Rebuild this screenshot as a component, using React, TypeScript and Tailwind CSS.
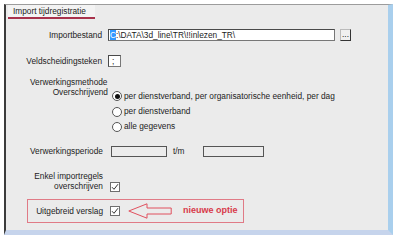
import React from "react";

const font = { fontFamily: '"Liberation Sans", Arial, sans-serif' };

function Checkbox() {
  return (
    <div className="w-[10px] h-[10px] bg-white border border-[#6f6f6f] flex items-center justify-center shrink-0">
      <svg width="8" height="8" viewBox="0 0 8 8">
        <path d="M1 4.2 L3 6.3 L7 1.2" fill="none" stroke="#333" strokeWidth="1" />
      </svg>
    </div>
  );
}

function Radio({ checked }: { checked?: boolean }) {
  return (
    <div className="w-[10px] h-[10px] rounded-full bg-white border border-[#555] flex items-center justify-center shrink-0">
      {checked && <div className="w-[5px] h-[5px] rounded-full bg-[#111]" />}
    </div>
  );
}

export default function App() {
  return (
    <div className="w-[400px] h-[241px] bg-white text-[8.3px] text-[#1c1c1c]" style={font}>
      <div className="pt-[4px] pl-[4px] w-[393px]">
        <div className="h-[231px] bg-[#ebebeb] border-t border-t-[#9c9c9c] border-l-2 border-l-[#3c3c3c] border-r-[5px] border-r-[#a9cfed] border-b-[5px] border-b-[#c6d4ec] flex flex-col">
          {/* tab header */}
          <div className="ml-[2px] w-[87px] h-[14px] pl-[5px] bg-[#f3f3f3] border-b-2 border-b-[#a8324c] leading-[12px]">
            Import tijdregistratie
          </div>

          {/* Importbestand */}
          <div className="mt-[10px] flex items-center h-[12px]">
            <div className="w-[96px] text-right">Importbestand</div>
            <div className="ml-[6px] w-[227px] h-[12px] bg-white border border-[#777] border-t-[#4a4a4a] border-l-[#4a4a4a] leading-[10px] pl-[1px]">
              <span className="bg-[#3399ff] text-white">C</span>:\DATA\3d_line\TR\!!inlezen_TR\
            </div>
            <div className="ml-[5px] w-[11px] h-[12px] bg-[#f0f0f0] border border-[#bbb] border-b-[#333] border-r-[#333] leading-[8px] text-center">
              ...
            </div>
          </div>

          {/* Veldscheidingsteken */}
          <div className="mt-[14px] flex items-center h-[12px]">
            <div className="w-[96px] text-right">Veldscheidingsteken</div>
            <div className="ml-[6px] w-[13px] h-[12px] bg-white border border-[#777] border-t-[#4a4a4a] border-l-[#4a4a4a] leading-[10px] pl-[3px]">
              ;
            </div>
          </div>

          {/* Verwerkingsmethode */}
          <div className="mt-[11px] ml-[24px] leading-[9px] h-[9px]">Verwerkingsmethode</div>
          <div className="mt-[1px] flex">
            <div className="w-[102px] text-right leading-[8px]">Overschrijvend</div>
            <div className="ml-[4px] flex flex-col">
              <div className="h-[16px] flex items-center gap-[2px]">
                <Radio checked />
                <span>per dienstverband, per organisatorische eenheid, per dag</span>
              </div>
              <div className="h-[15px] flex items-center gap-[2px]">
                <Radio />
                <span>per dienstverband</span>
              </div>
              <div className="h-[15px] flex items-center gap-[2px]">
                <Radio />
                <span>alle gegevens</span>
              </div>
            </div>
          </div>

          {/* Verwerkingsperiode */}
          <div className="mt-[12px] flex items-center h-[11px]">
            <div className="ml-[24px] w-[81px]">Verwerkingsperiode</div>
            <div className="w-[56px] h-[11px] bg-[#ececec] border border-[#555]" />
            <div className="ml-[6px] w-[30px]">t/m</div>
            <div className="w-[61px] h-[11px] bg-[#ececec] border border-[#555]" />
          </div>

          {/* Enkel importregels */}
          <div className="mt-[14px] flex items-end">
            <div className="w-[97px] text-right leading-[10px]">
              Enkel importregels
              <br />
              overschrijven
            </div>
            <div className="ml-[7px] mb-[-1px]">
              <Checkbox />
            </div>
          </div>

          {/* Uitgebreid verslag */}
          <div className="mt-[8px] ml-[21px] w-[217px] h-[24px] border border-[#e07a86] flex items-center">
            <div className="w-[75px] text-right">Uitgebreid verslag</div>
            <div className="ml-[7px]">
              <Checkbox />
            </div>
            <svg className="ml-[8px] shrink-0" width="44" height="16" viewBox="0 0 44 16">
              <path
                d="M0.8 8 L19 0.8 L19 5 L43.2 5 L43.2 11 L19 11 L19 15.2 Z"
                fill="none"
                stroke="#e0505e"
                strokeWidth="1"
              />
            </svg>
            <div className="ml-[11px] font-bold text-[9px] text-[#d8394a]">nieuwe optie</div>
          </div>
        </div>
      </div>
    </div>
  );
}
